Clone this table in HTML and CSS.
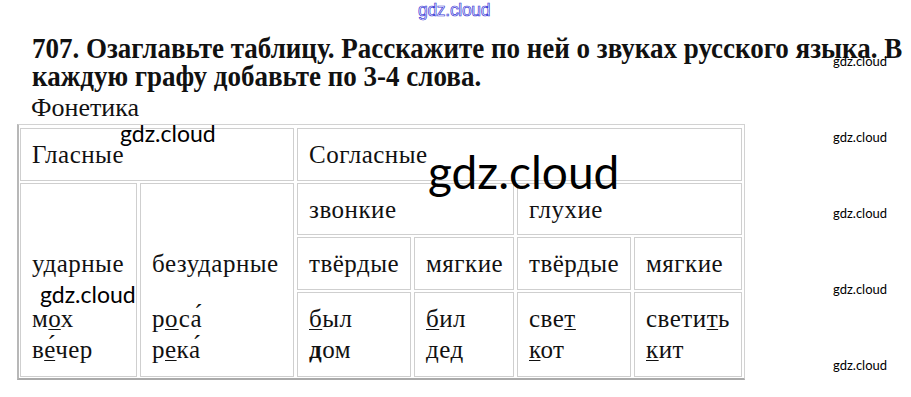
FILE: index.html
```html
<!DOCTYPE html>
<html lang="ru">
<head>
<meta charset="utf-8">
<title>707</title>
<link rel="stylesheet" href="styles.css">
</head>
<body>
<div class="page">
  <div class="task">
    <span class="task-line">707. Озаглавьте таблицу. Расскажите по ней о звуках русского языка. В</span>
    <span class="task-line">каждую графу добавьте по 3-4 слова.</span>
  </div>
  <div class="subject">Фонетика</div>
  <div class="table">
    <div class="cell c-vow">Гласные</div>
    <div class="cell c-cons">Согласные</div>
    <div class="cell c-col1">
      <div class="head">ударные</div>
      <div class="words">м<u>о</u>х<br>в<u>е́</u>чер</div>
    </div>
    <div class="cell c-col2">
      <div class="head">безударные</div>
      <div class="words">р<u>о</u>са́<br>р<u>е</u>ка́</div>
    </div>
    <div class="cell c-voiced">звонкие</div>
    <div class="cell c-voiceless">глухие</div>
    <div class="cell c-h3">твёрдые</div>
    <div class="cell c-h4">мягкие</div>
    <div class="cell c-h5">твёрдые</div>
    <div class="cell c-h6">мягкие</div>
    <div class="cell c-w3"><u>б</u>ыл<br><u class="strong">д</u>ом</div>
    <div class="cell c-w4"><u>б</u>ил<br>дед</div>
    <div class="cell c-w5">све<u>т</u><br><u>к</u>от</div>
    <div class="cell c-w6">свети<u>т</u>ь<br><u>к</u>ит</div>
  </div>

  <div class="wm wm-top">gdz.cloud</div>
  <div class="wm wm-big">gdz.cloud</div>
  <div class="wm wm-mid wm-mid1">gdz.cloud</div>
  <div class="wm wm-mid wm-mid2">gdz.cloud</div>
  <div class="wm wm-small wm-s1">gdz.cloud</div>
  <div class="wm wm-small wm-s2">gdz.cloud</div>
  <div class="wm wm-small wm-s3">gdz.cloud</div>
  <div class="wm wm-small wm-s4">gdz.cloud</div>
  <div class="wm wm-small wm-s5">gdz.cloud</div>
</div>
</body>
</html>
```
FILE: styles.css
```css
html, body {
  margin: 0;
  padding: 0;
  background: #ffffff;
}

.page {
  position: relative;
  width: 911px;
  height: 397px;
  overflow: hidden;
  font-family: "Liberation Serif", "Times New Roman", serif;
  color: #111;
}

.task {
  padding-top: 34px;
  padding-left: 32px;
  font-weight: bold;
  font-size: 30px;
  line-height: 28px;
}

.task-line {
  display: block;
  white-space: nowrap;
  transform: scaleX(0.9);
  transform-origin: left center;
}

.subject {
  margin-top: 4px;
  padding-left: 31px;
  font-size: 26px;
  line-height: 28px;
}

.table {
  margin-top: 2px;
  margin-left: 17px;
  width: 722px;
  display: grid;
  grid-template-columns: 117px 154px 114px 100px 114px 108px;
  grid-template-rows: 53px 52px 53px 85px;
  gap: 2px 3px;
  padding: 3px 2px 1px 1px;
  border: 1px solid #d2d2d2;
  border-left: 2px solid #b8b8b8;
  border-bottom: 2px solid #aaaaaa;
  font-size: 25px;
  line-height: 31px;
  letter-spacing: 0.5px;
}

.cell {
  border: 1px solid #cfcfcf;
  padding: 10px 0 0 11px;
  white-space: nowrap;
}

.c-vow { grid-column: 1 / 3; grid-row: 1; }
.c-cons { grid-column: 3 / 7; grid-row: 1; }
.c-col1 { grid-column: 1; grid-row: 2 / 5; padding-top: 64px; }
.c-col2 { grid-column: 2; grid-row: 2 / 5; padding-top: 64px; }
.c-voiced { grid-column: 3 / 5; grid-row: 2; }
.c-voiceless { grid-column: 5 / 7; grid-row: 2; }
.c-h3 { grid-column: 3; grid-row: 3; }
.c-h4 { grid-column: 4; grid-row: 3; }
.c-h5 { grid-column: 5; grid-row: 3; }
.c-h6 { grid-column: 6; grid-row: 3; }
.c-w3 { grid-column: 3; grid-row: 4; }
.c-w4 { grid-column: 4; grid-row: 4; }
.c-w5 { grid-column: 5; grid-row: 4; }
.c-w6 { grid-column: 6; grid-row: 4; }

.words {
  margin-top: 24px;
}

u {
  text-decoration-thickness: 1px;
  text-underline-offset: 2px;
}

u.strong {
  font-weight: bold;
  text-decoration-thickness: 2px;
}

.wm {
  position: absolute;
  line-height: 1;
  white-space: nowrap;
  font-family: Lato, "Open Sans", sans-serif;
  color: #000;
  letter-spacing: 0;
}

.wm-top {
  left: 418px;
  top: 2px;
  font-family: "Liberation Sans", Arial, sans-serif;
  font-size: 17.5px;
  color: #f4f4ff;
  -webkit-text-stroke: 0.7px #3a3ad6;
  letter-spacing: -0.3px;
}

.wm-big {
  left: 428px;
  top: 149px;
  font-size: 46px;
}

.wm-mid {
  font-size: 23px;
}

.wm-mid1 { left: 120px; top: 122px; }
.wm-mid2 { left: 40px; top: 283px; }

.wm-small {
  left: 833px;
  font-size: 13px;
}

.wm-s1 { top: 55px; }
.wm-s2 { top: 131px; }
.wm-s3 { top: 207px; }
.wm-s4 { top: 283px; }
.wm-s5 { top: 359px; }
```
